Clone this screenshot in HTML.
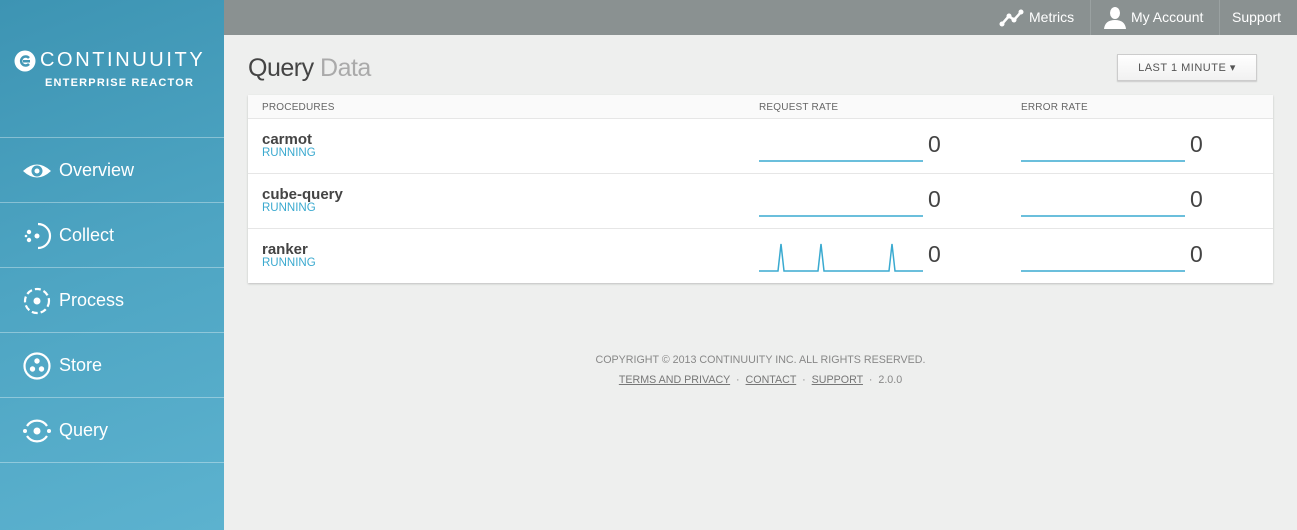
<!DOCTYPE html>
<html><head><meta charset="utf-8"><style>
*{margin:0;padding:0;box-sizing:border-box}
body{width:1297px;height:530px;overflow:hidden;background:#eeefee;font-family:"Liberation Sans",Arial,sans-serif;position:relative}
#side{position:absolute;left:0;top:0;width:224px;height:530px;background:linear-gradient(160deg,#3d94b3 0%,#4ea5c3 50%,#5cb2cf 100%)}
.logo{position:absolute;left:14px;top:50px;color:#fff;}
.logo .t{position:absolute;left:26px;top:-1px;font-size:20px;letter-spacing:2.6px;font-weight:normal;white-space:nowrap}
.logo .s{position:absolute;left:31px;top:27px;font-size:11px;font-weight:bold;letter-spacing:1.2px;white-space:nowrap}
.nav{position:absolute;left:0;width:224px;height:65px;border-top:1px solid rgba(255,255,255,.35);color:#fff;font-size:18px}
.nav span{position:absolute;left:59px;top:22px}
.nav svg{position:absolute;left:22px;top:18px}
#top{position:absolute;left:224px;top:0;right:0;height:35px;background:#8a9191;color:#fff;font-size:14px}
#top div{position:absolute;top:0;height:35px;line-height:34px;border-left:1px solid #9aa1a1}
h1{position:absolute;left:248px;top:54px;font-size:25px;font-weight:normal;color:#444;letter-spacing:-0.5px}
h1 span{color:#aaa}
.btn{position:absolute;left:1117px;top:54px;width:140px;height:27px;background:linear-gradient(#fff,#f1f1f1);border:1px solid #ccc;box-shadow:0 1px 1px rgba(0,0,0,.15);font-size:11px;color:#555;text-align:center;line-height:26px;letter-spacing:.5px}
#tbl{position:absolute;left:248px;top:95px;width:1025px;height:188px;background:#fff;box-shadow:0 1px 2px rgba(0,0,0,.2)}
.hd{height:24px;background:#fafafa;border-bottom:1px solid #e6e6e6;font-size:10px;color:#666;letter-spacing:.2px;position:relative}
.hd span{position:absolute;top:7px}
.row{height:55px;border-bottom:1px solid #e6e6e6;position:relative}
.row:last-child{border-bottom:none}
.nm{position:absolute;left:14px;top:12px;font-size:15px;font-weight:bold;color:#444}
.st{position:absolute;left:14px;top:28px;font-size:11.5px;color:#3aa9cf}
.num{position:absolute;top:12px;font-size:23px;color:#444}
.row svg{position:absolute;top:0}
.ft{position:absolute;left:248px;width:1025px;text-align:center;font-size:10.7px;color:#888}
.ft u{color:#777}
</style></head><body>
<div id="side">
<div class="logo">
<svg width="22" height="22" viewBox="0 0 22 22" style="position:absolute;left:0;top:0"><circle cx="11" cy="11" r="10.5" fill="#fff"/><path d="M15 8 A4.5 4.5 0 1 0 15 14" stroke="#4498b6" stroke-width="2.5" fill="none"/><rect x="9" y="10" width="7" height="2.5" fill="#4498b6"/></svg>
<div class="t">CONTINUUITY</div><div class="s">ENTERPRISE REACTOR</div></div>
<div class="nav" style="top:137px"><svg width="30" height="30" viewBox="0 0 30 30"><path d="M1 15 Q15 2 29 15 Q15 28 1 15Z" fill="#fff"/><circle cx="15" cy="15" r="5.5" fill="#4a9fbe"/><circle cx="15" cy="15" r="2.5" fill="#fff"/></svg><span>Overview</span></div>
<div class="nav" style="top:202px"><svg width="30" height="30" viewBox="0 0 30 30"><path d="M16 3 A12 12 0 0 1 16 27" stroke="#fff" stroke-width="2.2" fill="none"/><circle cx="15" cy="15" r="2.5" fill="#fff"/><circle cx="7" cy="11" r="2.2" fill="#fff"/><circle cx="7" cy="19" r="2.2" fill="#fff"/><circle cx="4" cy="15" r="1.3" fill="#fff"/></svg><span>Collect</span></div>
<div class="nav" style="top:267px"><svg width="30" height="30" viewBox="0 0 30 30"><circle cx="15" cy="15" r="12" stroke="#fff" stroke-width="2.2" fill="none" stroke-dasharray="6 3"/><circle cx="15" cy="15" r="3.5" fill="#fff"/></svg><span>Process</span></div>
<div class="nav" style="top:332px"><svg width="30" height="30" viewBox="0 0 30 30"><circle cx="15" cy="15" r="12.5" stroke="#fff" stroke-width="2.2" fill="none"/><circle cx="15" cy="10" r="2.7" fill="#fff"/><circle cx="10.5" cy="18" r="2.7" fill="#fff"/><circle cx="19.5" cy="18" r="2.7" fill="#fff"/></svg><span>Store</span></div>
<div class="nav" style="top:397px;height:66px;border-bottom:1px solid rgba(255,255,255,.35)"><svg width="30" height="30" viewBox="0 0 30 30"><path d="M5 10 A12 12 0 0 1 25 10 M25 20 A12 12 0 0 1 5 20" stroke="#fff" stroke-width="2.2" fill="none"/><circle cx="15" cy="15" r="3.5" fill="#fff"/><circle cx="3" cy="15" r="2" fill="#fff"/><circle cx="27" cy="15" r="2" fill="#fff"/></svg><span>Query</span></div>
</div>
<div id="top">
<div style="left:763px;width:104px;border-left:none"><svg width="26" height="20" viewBox="0 0 26 20" style="position:absolute;left:12px;top:8px"><path d="M3 16 L10 8 L15 12 L22 4" stroke="#fff" stroke-width="2.5" fill="none"/><circle cx="3" cy="16" r="2.5" fill="#fff"/><circle cx="10" cy="8" r="2.5" fill="#fff"/><circle cx="15" cy="12" r="2.5" fill="#fff"/><circle cx="22" cy="4" r="2.5" fill="#fff"/></svg><span style="position:absolute;left:42px">Metrics</span></div>
<div style="left:866px;width:130px"><svg width="24" height="24" viewBox="0 0 24 24" style="position:absolute;left:12px;top:5px"><ellipse cx="12" cy="8" rx="5" ry="6" fill="#fff"/><path d="M1 24 Q2 15 12 15 Q22 15 23 24Z" fill="#fff"/></svg><span style="position:absolute;left:40px">My Account</span></div>
<div style="left:995px;width:78px"><span style="position:absolute;left:12px">Support</span></div>
</div>
<h1>Query <span>Data</span></h1>
<div class="btn">LAST 1 MINUTE &#9662;</div>
<div id="tbl">
<div class="hd"><span style="left:14px">PROCEDURES</span><span style="left:511px">REQUEST RATE</span><span style="left:773px">ERROR RATE</span></div>
<div class="row"><div class="nm">carmot</div><div class="st">RUNNING</div>
<svg width="1025" height="55"><path d="M511 42H675M773 42H937" stroke="#3aaad0" stroke-width="1.5"/></svg><div class="num" style="left:680px">0</div><div class="num" style="left:942px">0</div></div>
<div class="row"><div class="nm">cube-query</div><div class="st">RUNNING</div>
<svg width="1025" height="55"><path d="M511 42H675M773 42H937" stroke="#3aaad0" stroke-width="1.5"/></svg><div class="num" style="left:680px">0</div><div class="num" style="left:942px">0</div></div>
<div class="row"><div class="nm">ranker</div><div class="st">RUNNING</div>
<svg width="1025" height="55"><path d="M511 42H530L533 15L536 42H570L573 15L576 42H641L644 15L647 42H675M773 42H937" stroke="#3aaad0" stroke-width="1.5" fill="none"/></svg><div class="num" style="left:680px">0</div><div class="num" style="left:942px">0</div></div>
</div>
<div class="ft" style="top:354px">COPYRIGHT © 2013 CONTINUUITY INC. ALL RIGHTS RESERVED.</div>
<div class="ft" style="top:374px"><u>TERMS AND PRIVACY</u> &nbsp;·&nbsp; <u>CONTACT</u> &nbsp;·&nbsp; <u>SUPPORT</u> &nbsp;·&nbsp; 2.0.0</div>
</body></html>
